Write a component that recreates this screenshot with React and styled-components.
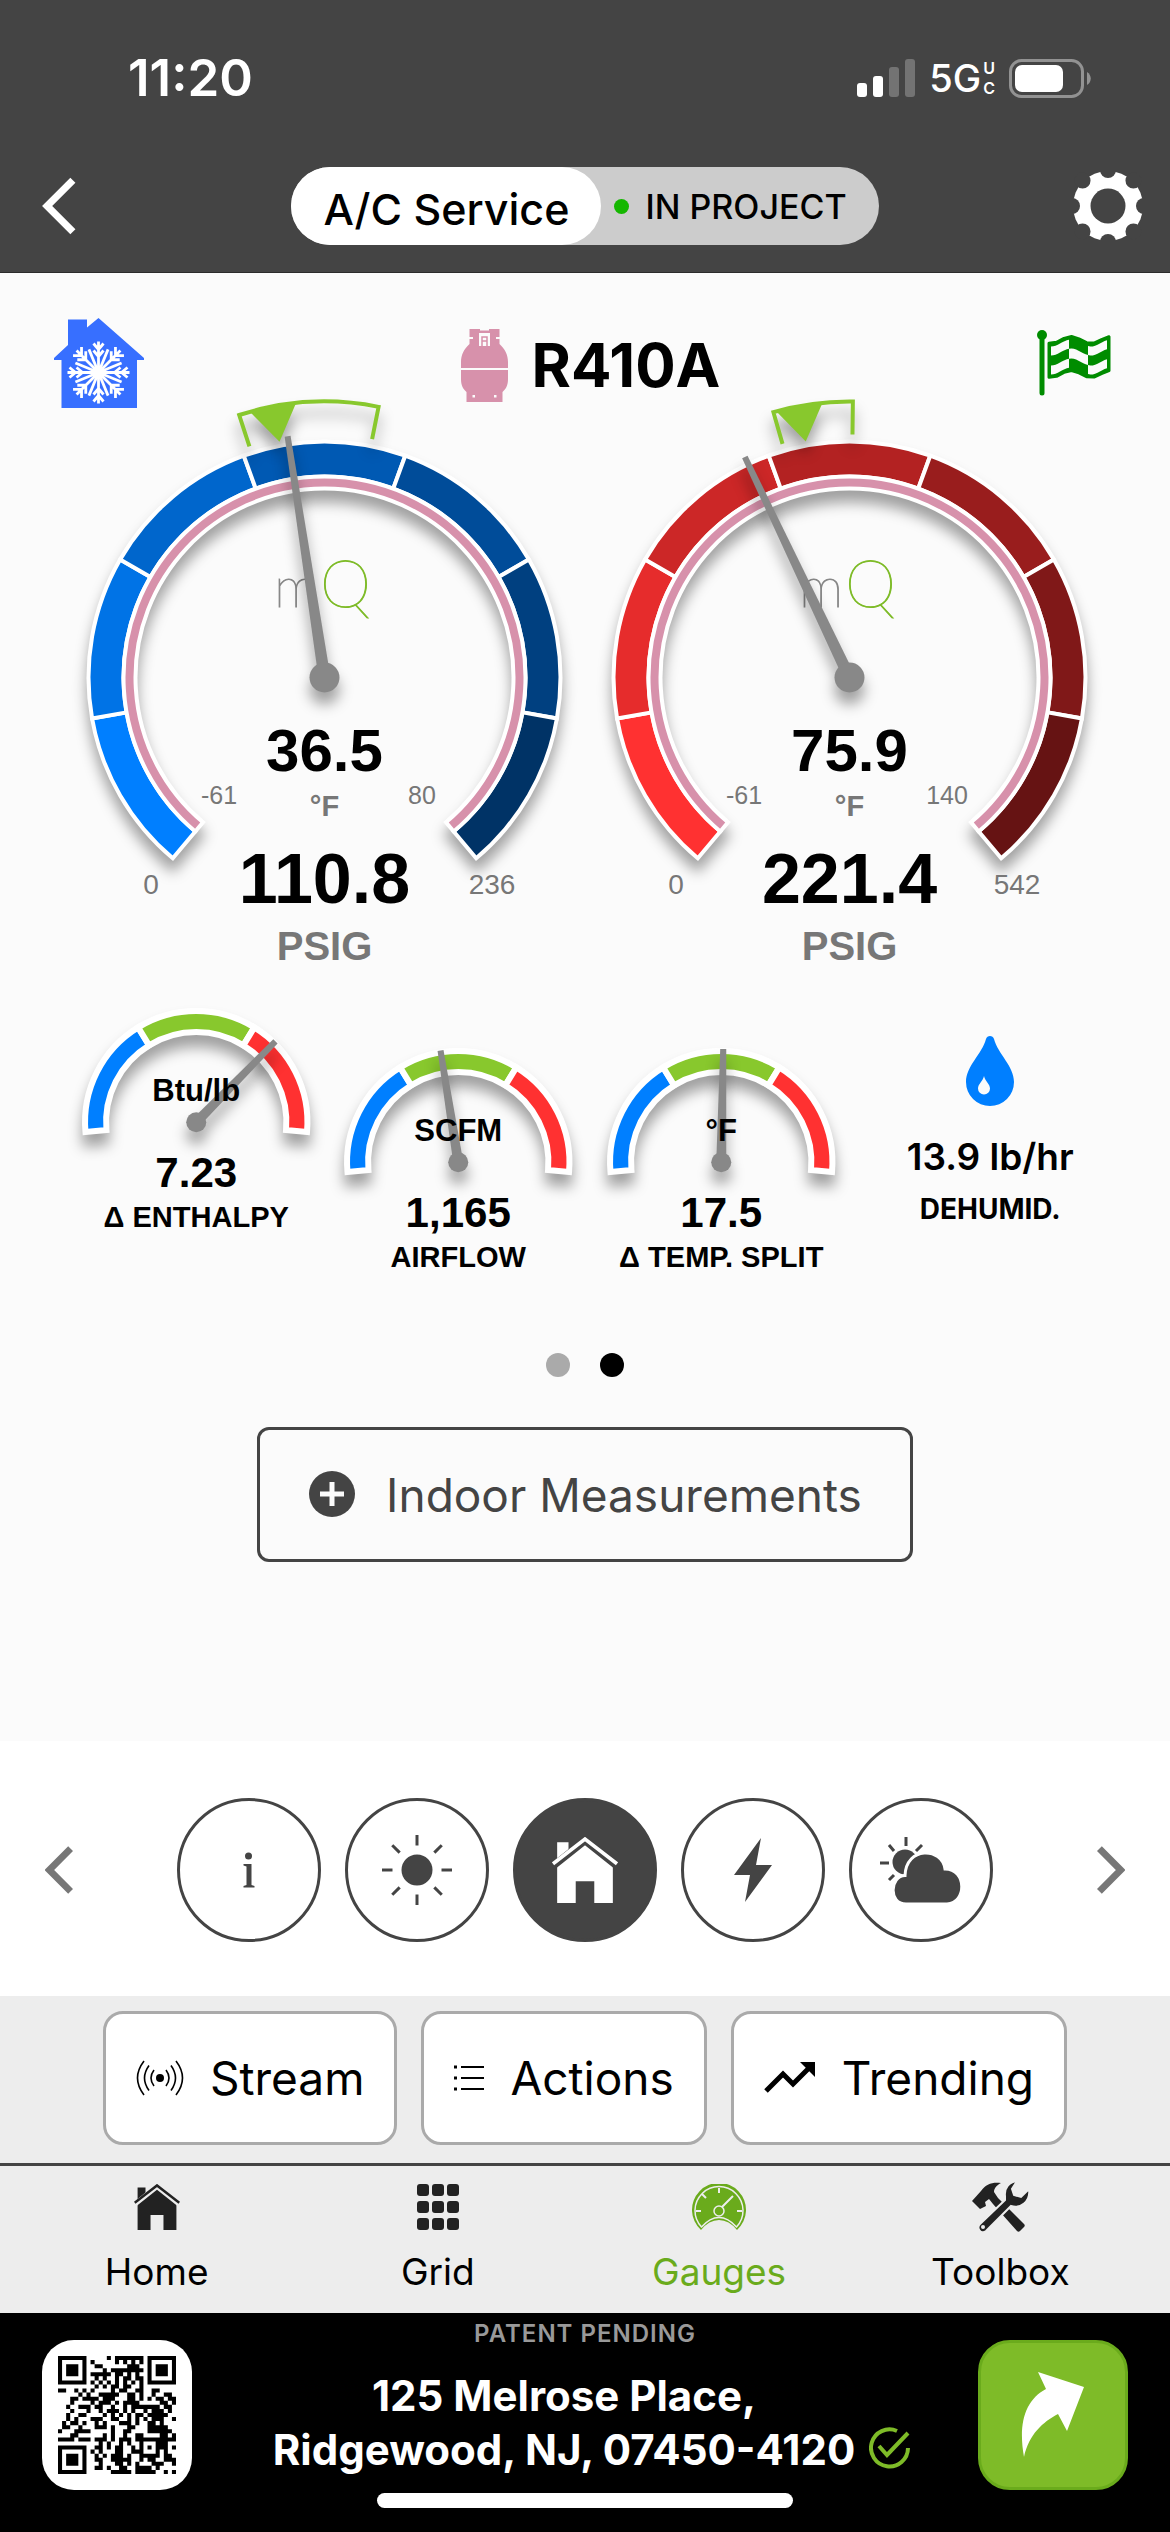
import React from "react";
import styled, { createGlobalStyle } from "styled-components";

const GlobalStyle = createGlobalStyle`
  * { box-sizing: border-box; }
  body { margin: 0; background: #fbfbfb; }
  button, a { font: inherit; color: inherit; }
`;

const sans = `Inter, "Noto Sans", sans-serif`;
const arial = `"Liberation Sans", Arial, sans-serif`;

const Page = styled.div`
  display: flex;
  flex-direction: column;
  min-height: 100vh;
  font-family: ${sans};
  color: #000;
`;

/* ---------- header ---------- */

const Header = styled.header`
  background: #444;
  color: #fff;
  border-bottom: 1px solid #2b2b2b;
`;

const StatusBar = styled.div`
  display: flex;
  align-items: center;
  justify-content: space-between;
  height: 140px;
  padding: 16px 79px 0 128px;
`;

const Clock = styled.span`
  font-size: 51px;
  line-height: 60px;
  font-weight: 600;
`;

const StatusIcons = styled.div`
  display: flex;
  align-items: center;
  gap: 14px;
`;

const Network = styled.span`
  display: flex;
  align-items: center;
  gap: 2px;
  font-size: 38px;
  line-height: 48px;
  font-weight: 500;
`;

const NetworkSuffix = styled.span`
  display: flex;
  flex-direction: column;
  font-size: 16px;
  line-height: 20px;
  font-weight: 600;
`;

const TitleBar = styled.div`
  display: flex;
  align-items: center;
  justify-content: space-between;
  height: 132px;
  padding: 0 26px 0 42px;
`;

const IconButton = styled.button`
  display: flex;
  padding: 0;
  border: 0;
  background: none;
`;

const ProjectPill = styled.button`
  display: flex;
  align-items: stretch;
  height: 78px;
  margin-left: 21px;
  padding: 0;
  border: 0;
  border-radius: 39px;
  background: #ccc;
  color: #000;
`;

const PillTitle = styled.span`
  display: flex;
  align-items: center;
  padding: 6px 32px 0;
  border-radius: 39px;
  background: #fff;
  font-size: 43px;
  font-weight: 500;
`;

const PillStatus = styled.span`
  display: flex;
  align-items: center;
  gap: 16px;
  padding: 0 32px 0 13px;
  font-size: 34px;
  font-weight: 500;
`;

const StatusDot = styled.i`
  width: 15px;
  height: 15px;
  border-radius: 50%;
  background: #15b700;
`;

/* ---------- gauges ---------- */

const Main = styled.main`
  display: flex;
  flex-direction: column;
  align-items: center;
  padding-bottom: 179px;
  background: #fbfbfb;
`;

const SystemRow = styled.div`
  display: flex;
  align-items: center;
  justify-content: space-between;
  align-self: stretch;
  padding: 45px 59px 0 54px;
`;

const Refrigerant = styled.h1`
  display: flex;
  align-items: center;
  gap: 24px;
  margin: 4px 0 0;
  font-size: 60px;
  line-height: 72px;
  font-weight: 700;
`;

const BigGauges = styled.section`
  display: grid;
  grid-template-columns: 1fr 1fr;
  align-self: stretch;
  padding: 0 58px 0 62px;
`;

const SmallGauges = styled.section`
  display: grid;
  grid-template-columns: 262fr 262fr 262fr 275fr;
  align-self: stretch;
  padding: 24px 42px 0 65px;
`;

const SmallCell = styled.div`
  padding-top: ${(p) => (p.$lowered ? 40 : 0)}px;
`;

const Dial = styled.svg`
  display: block;
  width: 100%;
  height: auto;
  overflow: visible;
  font-family: ${arial};
  text-anchor: middle;
`;

const Shadowed = styled.g`
  filter: drop-shadow(0 12px 7px rgba(0, 0, 0, 0.36));
`;

const Brand = styled.text`
  font-family: Lato, ${sans};
  font-weight: 100;
  font-size: ${(p) => p.$size}px;
  fill: ${(p) => p.$color};
  stroke: ${(p) => p.$color};
  stroke-width: 1px;
  text-anchor: start;
`;

const Reading = styled.text`
  font-size: ${(p) => p.$size}px;
  font-weight: 700;
  fill: ${(p) => p.$color || "#000"};
`;

const ScaleText = styled.text`
  font-size: ${(p) => p.$size}px;
  fill: #777;
`;

const Moisture = styled.div`
  display: flex;
  flex-direction: column;
  align-items: center;
  padding-top: 36px;
`;

const MoistureValue = styled.strong`
  margin-top: 29px;
  font-size: 37px;
  line-height: 44px;
  font-weight: 600;
`;

const MoistureLabel = styled.span`
  margin-top: 12px;
  font-size: 28px;
  line-height: 36px;
  font-weight: 700;
`;

const Dots = styled.div`
  display: flex;
  gap: 30px;
  margin-top: 73px;
`;

const Dot = styled.button`
  width: 24px;
  height: 24px;
  padding: 0;
  border: 0;
  border-radius: 50%;
  background: ${(p) => (p.$active ? "#000" : "#aaa")};
`;

const MeasureButton = styled.button`
  display: flex;
  align-items: center;
  gap: 30px;
  height: 135px;
  margin-top: 50px;
  padding: 0 48px;
  border: 3px solid #444;
  border-radius: 12px;
  background: transparent;
  color: #444;
  font-size: 46px;
`;

/* ---------- section strip ---------- */

const Strip = styled.nav`
  display: flex;
  align-items: center;
  justify-content: space-between;
  padding: 57px 45px 54px;
  background: #fff;
`;

const StripItems = styled.div`
  display: flex;
  gap: 24px;
`;

const RoundButton = styled.button`
  display: flex;
  align-items: center;
  justify-content: center;
  width: 144px;
  height: 144px;
  padding: 0;
  border: 3px solid #444;
  border-radius: 50%;
  background: ${(p) => (p.$active ? "#444" : "#fff")};
  color: ${(p) => (p.$active ? "#fff" : "#444")};
`;

/* ---------- bottom bars ---------- */

const Toolbar = styled.div`
  display: flex;
  justify-content: center;
  gap: 24px;
  padding: 15px 0 18px;
  background: #ededed;
`;

const ToolButton = styled.button`
  display: flex;
  align-items: center;
  gap: 26px;
  height: 134px;
  padding: 0 30px;
  border: 3px solid #aaa;
  border-radius: 20px;
  background: #fff;
  font-size: 46px;
`;

const TabBar = styled.nav`
  display: grid;
  grid-template-columns: repeat(4, 1fr);
  height: 150px;
  padding: 16px 29px 0 16px;
  border-top: 3px solid #444;
  background: #ededed;
`;

const Tab = styled.a`
  display: flex;
  flex-direction: column;
  align-items: center;
  gap: 16px;
  color: ${(p) => (p.$active ? "#6aab1c" : "#000")};
  font-size: 37px;
  line-height: 48px;
  text-decoration: none;
`;

const TabIcon = styled.span`
  display: flex;
  align-items: center;
  height: 50px;
  color: ${(p) => (p.$active ? "#6aab1c" : "#222")};
`;

const Footer = styled.footer`
  display: flex;
  flex: 1;
  justify-content: space-between;
  min-height: 219px;
  padding: 0 42px;
  background: #000;
  color: #fff;
`;

const FooterTile = styled.button`
  display: flex;
  align-items: center;
  justify-content: center;
  width: 150px;
  height: 150px;
  margin-top: 27px;
  padding: 0;
  border: ${(p) => (p.$green ? "3px solid #6aab1c" : "0")};
  border-radius: 32px;
  background: ${(p) => (p.$green ? "#7ebb28" : "#fff")};
`;

const FooterCenter = styled.div`
  display: flex;
  flex-direction: column;
  align-items: center;
  padding-top: 6px;
`;

const Patent = styled.span`
  color: #999;
  font-size: 24px;
  line-height: 30px;
  font-weight: 600;
  letter-spacing: 1px;
`;

const AddressRow = styled.div`
  display: flex;
  align-items: flex-end;
  gap: 14px;
  margin: 20px 0 0 14px;
`;

const Address = styled.address`
  font-size: 42px;
  line-height: 54px;
  font-weight: 700;
  font-style: normal;
  text-align: center;
`;

const Verified = styled.span`
  display: flex;
  padding-bottom: 8px;
`;

const HomeIndicator = styled.div`
  width: 416px;
  height: 15px;
  margin-top: 16px;
  border-radius: 8px;
  background: #fff;
`;

/* ---------- geometry ---------- */

const polar = (cx, cy, r, deg) => {
  const a = (deg * Math.PI) / 180;
  return `${(cx + r * Math.sin(a)).toFixed(2)} ${(cy - r * Math.cos(a)).toFixed(2)}`;
};

const ring = (cx, cy, r0, r1, from, to) => {
  const large = to - from > 180 ? 1 : 0;
  return `M${polar(cx, cy, r1, from)} A${r1} ${r1} 0 ${large} 1 ${polar(cx, cy, r1, to)} L${polar(cx, cy, r0, to)} A${r0} ${r0} 0 ${large} 0 ${polar(cx, cy, r0, from)}Z`;
};

function Needle({ cx, cy, angle, length, base, tip, hub }) {
  return (
    <Shadowed>
      <path
        transform={`rotate(${angle} ${cx} ${cy})`}
        fill="#888"
        d={`M${cx - base} ${cy} L${cx - tip} ${cy - length} H${cx + tip} L${cx + base} ${cy}Z`}
      />
      <circle cx={cx} cy={cy} r={hub} fill="#888" />
    </Shadowed>
  );
}

function BigGauge({ label, colors, angle, range, target, temp, tempRange, pressure, pressureMax }) {
  const cx = 262.5;
  const cy = 269.5;
  return (
    <Dial viewBox="0 0 525 568" role="img" aria-label={label}>
      <Shadowed>
        {colors.map((c, i) => (
          <path key={c} d={ring(cx, cy, 201, 236, -140 + i * 40, -100 + i * 40)} fill={c} stroke="#fff" strokeWidth="4" />
        ))}
        <path d={ring(cx, cy, 189, 201, -140, 140)} fill="#d791ab" stroke="#fff" strokeWidth="4" />
      </Shadowed>
      <Shadowed>
        <path
          d={`M${polar(cx, cy, 243, range[0])} L${polar(cx, cy, 276, range[0])} A276 276 0 0 1 ${polar(cx, cy, 276, range[1])} L${polar(cx, cy, 243, range[1])}`}
          fill="none"
          stroke="#88c82d"
          strokeWidth="4"
        />
        <path
          d={`M${polar(cx, cy, 277, target - 5)} A277 277 0 0 1 ${polar(cx, cy, 277, target + 5)} L${polar(cx, cy, 240, target)}Z`}
          fill="#88c82d"
        />
      </Shadowed>
      <Brand x="212" y="199" $size={56} $color="#888">m</Brand>
      <Brand x="258" y="199" $size={65} $color="#7ebb28">Q</Brand>
      <Needle cx={cx} cy={cy} angle={angle} length={244} base={6} tip={3} hub={15} />
      <Reading x={cx} y="363" $size={60}>{temp}</Reading>
      <Reading x={cx} y="408" $size={29} $color="#777">°F</Reading>
      <ScaleText x="157" y="396" $size={25}>{tempRange[0]}</ScaleText>
      <ScaleText x="360" y="396" $size={25}>{tempRange[1]}</ScaleText>
      <ScaleText x="89" y="486" $size={28}>0</ScaleText>
      <ScaleText x="430" y="486" $size={28}>{pressureMax}</ScaleText>
      <Reading x={cx} y="495" $size={70}>{pressure}</Reading>
      <Reading x={cx} y="552" $size={40} $color="#777">PSIG</Reading>
    </Dial>
  );
}

function SmallGauge({ unit, value, name, angle }) {
  const cx = 131;
  const cy = 122;
  const stops = [-95, -31.5, 31.5, 95];
  return (
    <Dial viewBox="0 0 262 240" role="img" aria-label={name}>
      <Shadowed>
        {["#007fff", "#88c82d", "#ff3131"].map((c, i) => (
          <path key={c} d={ring(cx, cy, 90, 111, stops[i], stops[i + 1])} fill={c} stroke="#fff" strokeWidth="6" />
        ))}
      </Shadowed>
      <Needle cx={cx} cy={cy} angle={angle} length={113} base={5} tip={3} hub={10} />
      <Reading x={cx} y="101" $size={31}>{unit}</Reading>
      <Reading x={cx} y="187" $size={42}>{value}</Reading>
      <Reading x={cx} y="227" $size={29}>{name}</Reading>
    </Dial>
  );
}

/* ---------- icons ---------- */

const SignalIcon = () => (
  <svg width="58" height="38" viewBox="0 0 58 38" fill="#fff">
    <rect x="0" y="24" width="10" height="14" rx="3" />
    <rect x="16" y="17" width="10" height="21" rx="3" />
    <rect x="32" y="8" width="10" height="30" rx="3" opacity=".25" />
    <rect x="48" y="0" width="10" height="38" rx="3" opacity=".25" />
  </svg>
);

const BatteryIcon = () => (
  <svg width="82" height="39" viewBox="0 0 82 39">
    <rect x="1.5" y="1.5" width="72" height="36" rx="11" fill="none" stroke="#929292" strokeWidth="3" />
    <rect x="6" y="6" width="48" height="27" rx="7" fill="#fff" />
    <path d="M78 13c5 3 5 10 0 13z" fill="#929292" />
  </svg>
);

const Chevron = ({ flip, width, height, color, stroke }) => (
  <svg width={width} height={height} viewBox="0 0 34 56" fill="none" stroke={color} strokeWidth={stroke}>
    <path d={flip ? "M4 3L29 28L4 53" : "M30 3L5 28L30 53"} />
  </svg>
);

const GearIcon = () => (
  <svg width="72" height="72" viewBox="-36 -36 72 72">
    <circle r="35" fill="#fff" />
    {[0, 45, 90, 135, 180, 225, 270, 315].map((a) => (
      <ellipse key={a} cx="0" cy="-36" rx="8" ry="8" fill="#444" transform={`rotate(${a})`} />
    ))}
    <circle r="17.5" fill="#444" />
  </svg>
);

const CoolHouseIcon = () => (
  <svg width="90" height="90" viewBox="0 0 90 90" role="img" aria-label="Cooling">
    <path fill="#376fff" d="M44.500 0L90 40V42H83V90H7.500V42H0V40L14 27V1.500H33V9.500Z" />
    <g transform="translate(44.500 54.500)" stroke="#fff" strokeWidth="2.800" fill="none">
      {[0, 90, 180, 270].map((a) => (
        <path key={a} transform={`rotate(${a})`} d="M0 0V-31M-5 -29L0 -23L5 -29M-5 -22L0 -16L5 -22" />
      ))}
      {[45, 135, 225, 315].map((a) => (
        <path key={a} transform={`rotate(${a})`} d="M0 0V-31M-6 -30L0 -24L6 -30M-6 -24L0 -18L6 -24" />
      ))}
      {[22.5, 67.5, 112.5, 157.5, 202.5, 247.5, 292.5, 337.5].map((a) => (
        <path key={a} transform={`rotate(${a})`} d="M0 0V-25" />
      ))}
      <circle r="7" fill="#fff" stroke="none" />
    </g>
  </svg>
);

const TankIcon = () => (
  <svg width="47" height="73" viewBox="0 0 47 73">
    <g fill="#d791ab">
      <path d="M8.500 0H19V1.500H28V0H38.500V8H35V10H38.500V15C44 20 47 26 47 33V39H0V33C0 26 3 20 8.500 15V10H12V8H8.500Z" />
      <path d="M0 41H47V50C47 56 45 60 41.500 63V73H5.500V63C2 60 0 56 0 50Z" />
    </g>
    <path fill="#fbfbfb" d="M18 4H29V17H18Z" />
    <path fill="none" stroke="#d791ab" strokeWidth="1.500" d="M21 17V8H26V17M21 12H26" />
    <path fill="#fbfbfb" d="M11.500 66h2.500v2.500h-2.500zM33 66h2.500v2.500h-2.500z" />
  </svg>
);

const wave = (x) => -3.5 * Math.cos(((x - 34) / 40) * 2 * Math.PI);
const waveLine = (x0, x1, y) => {
  const pts = [];
  const n = 8;
  for (let i = 0; i <= n; i += 1) {
    const x = x0 + ((x1 - x0) * i) / n;
    pts.push(`${x.toFixed(1)} ${(y + wave(x)).toFixed(1)}`);
  }
  return pts;
};
const band = (x0, x1, y0, y1) => `M${[...waveLine(x0, x1, y0), ...waveLine(x0, x1, y1).reverse()].join("L")}Z`;

const FlagIcon = () => (
  <svg width="74" height="66" viewBox="0 0 74 66" role="img" aria-label="Finish">
    <g fill="#008c00" stroke="#008c00" strokeLinejoin="round">
      <circle cx="5" cy="5" r="5" stroke="none" />
      <path d="M5 8V63" strokeWidth="5" strokeLinecap="round" />
      <path d={band(12, 72, 10, 44)} strokeWidth="3" />
    </g>
    {[[0, 0], [2, 0], [1, 1], [0, 2], [2, 2]].map(([c, r]) => (
      <path
        key={`${c}${r}`}
        fill="#fbfbfb"
        d={band([14, 32, 51][c], [32, 51, 70][c], [13, 22, 32][r], [22, 32, 41][r])}
      />
    ))}
  </svg>
);

const DropIcon = () => (
  <svg width="48" height="70" viewBox="0 0 48 70">
    <path fill="#007fff" d="M20 3C21-1 27-1 28 3C32 18 48 30 48 46A24 24 0 0 1 0 46C0 30 16 18 20 3Z" />
    <path fill="#fbfbfb" d="M18 40C19 45 24 48 24 52.500A6 6 0 0 1 12 52.500C12 48 17 45 18 40Z" />
  </svg>
);

const PlusIcon = () => (
  <svg width="48" height="48" viewBox="0 0 48 48">
    <circle cx="24" cy="23" r="23" fill="#444" />
    <path d="M24 11V35M12 23H36" stroke="#fbfbfb" strokeWidth="5" />
  </svg>
);

const InfoIcon = () => (
  <svg width="14" height="36" viewBox="0 0 14 36" fill="currentColor">
    <circle cx="6.500" cy="4" r="3.500" />
    <path d="M1.500 12H9.500V33L12.500 34V35.500H1.500V34L4.500 33V14.500L1.500 13.500Z" />
  </svg>
);

const SunIcon = () => (
  <svg width="72" height="72" viewBox="-36 -36 72 72" stroke="#444" strokeWidth="3">
    <circle r="15.500" fill="#444" stroke="none" />
    {[0, 45, 90, 135, 180, 225, 270, 315].map((a) => (
      <path key={a} d="M0 -24.500V-35" transform={`rotate(${a})`} />
    ))}
  </svg>
);

const HouseIcon = ({ size, gap }) => (
  <svg width={size} height={size} viewBox="0 0 64 64">
    <path fill="currentColor" d="M5 23V5H16V13L10 19ZM5 64V27L32 6L59 27V64H41V43H23V64Z" />
    <path fill="none" stroke={gap} strokeWidth="7" d="M0 29L32 3.500L64 29" />
    <path fill="none" stroke="currentColor" strokeWidth="3.500" d="M1 26L32 2L63 26" />
  </svg>
);

const BoltIcon = () => (
  <svg width="38" height="64" viewBox="0 0 38 64">
    <path fill="#444" d="M27 0L0 37H16L11 64L38 27H22Z" />
  </svg>
);

const CloudIcon = () => (
  <svg width="82" height="66" viewBox="0 0 82 66">
    <g stroke="#444" strokeWidth="3">
      <circle cx="25" cy="25" r="12.500" fill="#444" stroke="none" />
      <path d="M26 0V9M0 26H9M9 8L14 14M42 8L36 14M9 43L14 38" />
    </g>
    <path
      fill="#444"
      stroke="#fff"
      strokeWidth="3"
      d="M26 67C8 67 10 39 25 38.500C26 9 62 10 65 32C87 32 87 66 67 67Z"
    />
  </svg>
);

const StreamIcon = () => (
  <svg width="48" height="36" viewBox="-24 -18 48 36" fill="none" stroke="#000" strokeWidth="1.600">
    <circle r="4" fill="#000" stroke="none" />
    {[1, -1].map((s) => (
      <path key={s} transform={`scale(${s} 1)`} d="M6 -8Q12 0 6 8M11 -12.500Q20 0 11 12.500M16 -17Q29 0 16 17" />
    ))}
  </svg>
);

const ListIcon = () => (
  <svg width="30" height="26" viewBox="0 0 30 26" stroke="#000" strokeWidth="2">
    <path d="M7 2H30M7 13H30M7 24H30" />
    <path d="M0 2H3M0 13H3M0 24H3" strokeWidth="3" />
  </svg>
);

const TrendIcon = () => (
  <svg width="52" height="32" viewBox="0 0 52 32">
    <path d="M2 29L19 12L29 22L46 5" fill="none" stroke="#000" strokeWidth="5" />
    <path d="M36 0H51V15Z" />
  </svg>
);

const GridIcon = () => (
  <svg width="42" height="46" viewBox="0 0 42 46" fill="#222">
    {[0, 1, 2].map((r) =>
      [0, 1, 2].map((c) => <rect key={`${r}${c}`} x={c * 15} y={r * 17} width="12" height="12" rx="3" />)
    )}
  </svg>
);

const GaugesIcon = () => (
  <svg width="54" height="46" viewBox="0 0 54 46">
    <path fill="#6aab1c" d="M9 46A27 27 0 1 1 45 46Q37 36 27 36Q17 36 9 46Z" />
    <g fill="none" stroke="#ededed" strokeWidth="1.500">
      <path d="M9.500 43A24 24 0 1 1 44.500 43Q36 33.500 27 33.500Q18 33.500 9.500 43Z" />
      <circle cx="27" cy="27" r="5" />
      <path d="M30 23L41 12M27 4V9M4 27H9M45 27H50M10 10L14 14" strokeWidth="2" />
    </g>
  </svg>
);

const ToolboxIcon = () => (
  <svg width="58" height="50" viewBox="0 0 58 50">
    <g fill="#222">
      <path d="M1 19L10 9C15 2 21 0 30 1C26 3 23 6 23 10L27 16L53 42C54 43 54 44 53 45L49 49C48 50 47 50 46 49L22 22L18 17L14 20L15 24L9 27Z" />
    </g>
    <path
      fill="#222"
      stroke="#ededed"
      strokeWidth="2"
      d="M46 -1C38 0 33 6 34 14L34 18L9 42C5 46 10 53 15 49L40 24C49 27 60 20 58 7L50 15L43 13L41 7Z"
    />
    <circle cx="12" cy="45" r="2" fill="#ededed" />
  </svg>
);

const VerifiedIcon = () => (
  <svg width="42" height="42" viewBox="0 0 42 42" fill="none" stroke="#7ebb28" strokeWidth="4">
    <path d="M28 4A18.500 18.500 0 1 0 39 21" />
    <path d="M10 19L18 28L39 6" />
  </svg>
);

const ShareIcon = () => (
  <svg width="64" height="86" viewBox="0 0 64 86">
    <path fill="#fff" d="M17 0L63 15L46 59L37 42C22 50 8 62 3 85C-3 52 4 28 25 17Z" />
  </svg>
);

const QR_SIZE = 29;
const inFinder = (x, y) => {
  const corners = [[0, 0], [QR_SIZE - 7, 0], [0, QR_SIZE - 7]];
  for (const [fx, fy] of corners) {
    const dx = x - fx;
    const dy = y - fy;
    if (dx >= -1 && dx <= 7 && dy >= -1 && dy <= 7) {
      const d = Math.max(Math.abs(dx - 3), Math.abs(dy - 3));
      return d === 3 || d < 2 ? 1 : 0;
    }
  }
  const d = Math.max(Math.abs(x - 22), Math.abs(y - 22));
  if (d <= 2) return d === 1 ? 0 : 1;
  if (x === 6 || y === 6) return (x + y) % 2 === 0 ? 1 : 0;
  return -1;
};
const qrPath = (() => {
  let seed = 40979;
  let d = "";
  for (let y = 0; y < QR_SIZE; y += 1) {
    for (let x = 0; x < QR_SIZE; x += 1) {
      seed = (seed * 1103515245 + 12345) % 2147483648;
      const fixed = inFinder(x, y);
      if (fixed === 1 || (fixed === -1 && seed / 2147483648 > 0.48)) d += `M${x} ${y}h1v1h-1z`;
    }
  }
  return d;
})();

const QrIcon = () => (
  <svg width="118" height="118" viewBox="0 0 29 29">
    <path d={qrPath} />
  </svg>
);

/* ---------- page ---------- */

const BLUES = ["#007fff", "#0073e6", "#0066cc", "#0059b3", "#004c99", "#004080", "#003366"];
const REDS = ["#ff3131", "#e62c2c", "#cc2727", "#b32222", "#991d1d", "#801818", "#661313"];

export default function App() {
  return (
    <Page>
      <GlobalStyle />
      <Header>
        <StatusBar>
          <Clock>11:20</Clock>
          <StatusIcons>
            <SignalIcon />
            <Network>
              5G
              <NetworkSuffix>
                <span>U</span>
                <span>C</span>
              </NetworkSuffix>
            </Network>
            <BatteryIcon />
          </StatusIcons>
        </StatusBar>
        <TitleBar>
          <IconButton aria-label="Back">
            <Chevron width={35} height={58} color="#fff" stroke={7} />
          </IconButton>
          <ProjectPill>
            <PillTitle>A/C Service</PillTitle>
            <PillStatus>
              <StatusDot />
              IN PROJECT
            </PillStatus>
          </ProjectPill>
          <IconButton aria-label="Settings">
            <GearIcon />
          </IconButton>
        </TitleBar>
      </Header>

      <Main>
        <SystemRow>
          <CoolHouseIcon />
          <Refrigerant>
            <TankIcon />
            R410A
          </Refrigerant>
          <FlagIcon />
        </SystemRow>

        <BigGauges>
          <BigGauge
            label="Suction pressure"
            colors={BLUES}
            angle={-8.7}
            range={[-18, 11.3]}
            target={-10.8}
            temp="36.5"
            tempRange={["-61", "80"]}
            pressure="110.8"
            pressureMax="236"
          />
          <BigGauge
            label="Liquid pressure"
            colors={REDS}
            angle={-25.4}
            range={[-16, 0.7]}
            target={-10.5}
            temp="75.9"
            tempRange={["-61", "140"]}
            pressure="221.4"
            pressureMax="542"
          />
        </BigGauges>

        <SmallGauges>
          <SmallCell>
            <SmallGauge unit="Btu/lb" value="7.23" name="Δ ENTHALPY" angle={44.4} />
          </SmallCell>
          <SmallCell $lowered>
            <SmallGauge unit="SCFM" value="1,165" name="AIRFLOW" angle={-9} />
          </SmallCell>
          <SmallCell $lowered>
            <SmallGauge unit="°F" value="17.5" name="Δ TEMP. SPLIT" angle={1} />
          </SmallCell>
          <Moisture>
            <DropIcon />
            <MoistureValue>13.9 lb/hr</MoistureValue>
            <MoistureLabel>DEHUMID.</MoistureLabel>
          </Moisture>
        </SmallGauges>

        <Dots>
          <Dot aria-label="Page 1" />
          <Dot aria-label="Page 2" $active />
        </Dots>

        <MeasureButton>
          <PlusIcon />
          Indoor Measurements
        </MeasureButton>
      </Main>

      <Strip>
        <IconButton aria-label="Previous section">
          <Chevron width={29} height={48} color="#777" stroke={8} />
        </IconButton>
        <StripItems>
          <RoundButton aria-label="Information">
            <InfoIcon />
          </RoundButton>
          <RoundButton aria-label="Outdoor">
            <SunIcon />
          </RoundButton>
          <RoundButton aria-label="Indoor" $active>
            <HouseIcon size={66} gap="#444" />
          </RoundButton>
          <RoundButton aria-label="Electrical">
            <BoltIcon />
          </RoundButton>
          <RoundButton aria-label="Weather">
            <CloudIcon />
          </RoundButton>
        </StripItems>
        <IconButton aria-label="Next section">
          <Chevron flip width={29} height={48} color="#777" stroke={8} />
        </IconButton>
      </Strip>

      <Toolbar>
        <ToolButton>
          <StreamIcon />
          Stream
        </ToolButton>
        <ToolButton>
          <ListIcon />
          Actions
        </ToolButton>
        <ToolButton>
          <TrendIcon />
          Trending
        </ToolButton>
      </Toolbar>

      <TabBar>
        <Tab href="#home">
          <TabIcon>
            <HouseIcon size={46} gap="#ededed" />
          </TabIcon>
          Home
        </Tab>
        <Tab href="#grid">
          <TabIcon>
            <GridIcon />
          </TabIcon>
          Grid
        </Tab>
        <Tab href="#gauges" $active>
          <TabIcon $active>
            <GaugesIcon />
          </TabIcon>
          Gauges
        </Tab>
        <Tab href="#toolbox">
          <TabIcon>
            <ToolboxIcon />
          </TabIcon>
          Toolbox
        </Tab>
      </TabBar>

      <Footer>
        <FooterTile aria-label="QR code">
          <QrIcon />
        </FooterTile>
        <FooterCenter>
          <Patent>PATENT PENDING</Patent>
          <AddressRow>
            <Address>
              125 Melrose Place,
              <br />
              Ridgewood, NJ, 07450-4120
            </Address>
            <Verified>
              <VerifiedIcon />
            </Verified>
          </AddressRow>
          <HomeIndicator />
        </FooterCenter>
        <FooterTile $green aria-label="Share">
          <ShareIcon />
        </FooterTile>
      </Footer>
    </Page>
  );
}
